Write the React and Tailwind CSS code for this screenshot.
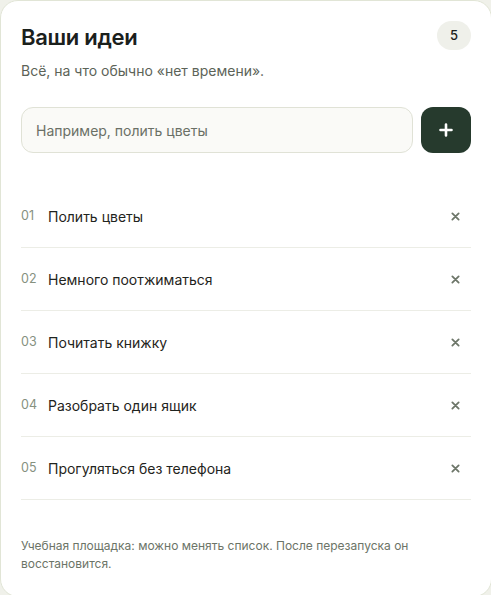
import React, { useState } from "react";

const initial = [
  "Полить цветы",
  "Немного поотжиматься",
  "Почитать книжку",
  "Разобрать один ящик",
  "Прогуляться без телефона",
];

function CloseIcon() {
  return (
    <svg width="9" height="9" viewBox="0 0 10 10" fill="none">
      <path d="M1.5 1.5l7 7M8.5 1.5l-7 7" stroke="currentColor" strokeWidth="2" strokeLinecap="round" />
    </svg>
  );
}

export default function App() {
  const [items, setItems] = useState(initial);
  const [text, setText] = useState("");

  const add = () => {
    if (!text.trim()) return;
    setItems([...items, text.trim()]);
    setText("");
  };

  return (
    <div className="min-h-screen bg-[#f0f1ea] overflow-hidden font-['Inter','Noto_Sans',sans-serif]">
      <div className="w-[492px] bg-white border border-[#e1e5d6] rounded-[18px] px-5 pt-[20px] pb-[23px]">
        {/* Header */}
        <div className="flex items-start justify-between">
          <h2 className="text-[22px] leading-[32px] font-semibold text-[#1b201c] tracking-[-0.3px]">
            Ваши идеи
          </h2>
          <span className="w-[34px] h-[29px] rounded-full bg-[#eff0ea] text-[13px] font-medium text-[#1b201c] flex items-center justify-center">
            {items.length}
          </span>
        </div>
        <p className="mt-[8px] text-[14px] leading-5 text-[#5c6358]">
          Всё, на что обычно «нет времени».
        </p>

        {/* Input */}
        <div className="mt-[26px] flex gap-2">
          <input
            value={text}
            onChange={(e) => setText(e.target.value)}
            placeholder="Например, полить цветы"
            className="flex-1 h-[46px] rounded-xl border border-[#e0e2d6] bg-[#fafaf7] px-[14px] text-[14px] text-[#1b201c] placeholder:text-[#6a7066] outline-none"
          />
          <button
            onClick={add}
            className="w-[50px] h-[46px] rounded-xl bg-[#263a2d] text-white flex items-center justify-center"
          >
            <svg width="14" height="14" viewBox="0 0 14 14">
              <path d="M7 1.5v11M1.5 7h11" stroke="currentColor" strokeWidth="2.6" strokeLinecap="round" />
            </svg>
          </button>
        </div>

        {/* List */}
        <ul className="mt-[32px]">
          {items.map((item, i) => (
            <li key={i} className="flex items-center h-[63px] border-b border-[#ecede6]">
              <span className="w-[27px] text-[12.5px] text-[#86917f]">
                {String(i + 1).padStart(2, "0")}
              </span>
              <span className="flex-1 text-[14px] text-[#1f2420]">{item}</span>
              <button
                onClick={() => setItems(items.filter((_, j) => j !== i))}
                className="w-8 h-8 flex items-center justify-center text-[#6d7669]"
              >
                <CloseIcon />
              </button>
            </li>
          ))}
        </ul>

        {/* Footer */}
        <p className="mt-[37px] text-[12px] leading-[18px] text-[#6c7467] pr-10">
          Учебная площадка: можно менять список. После перезапуска он восстановится.
        </p>
      </div>
    </div>
  );
}
